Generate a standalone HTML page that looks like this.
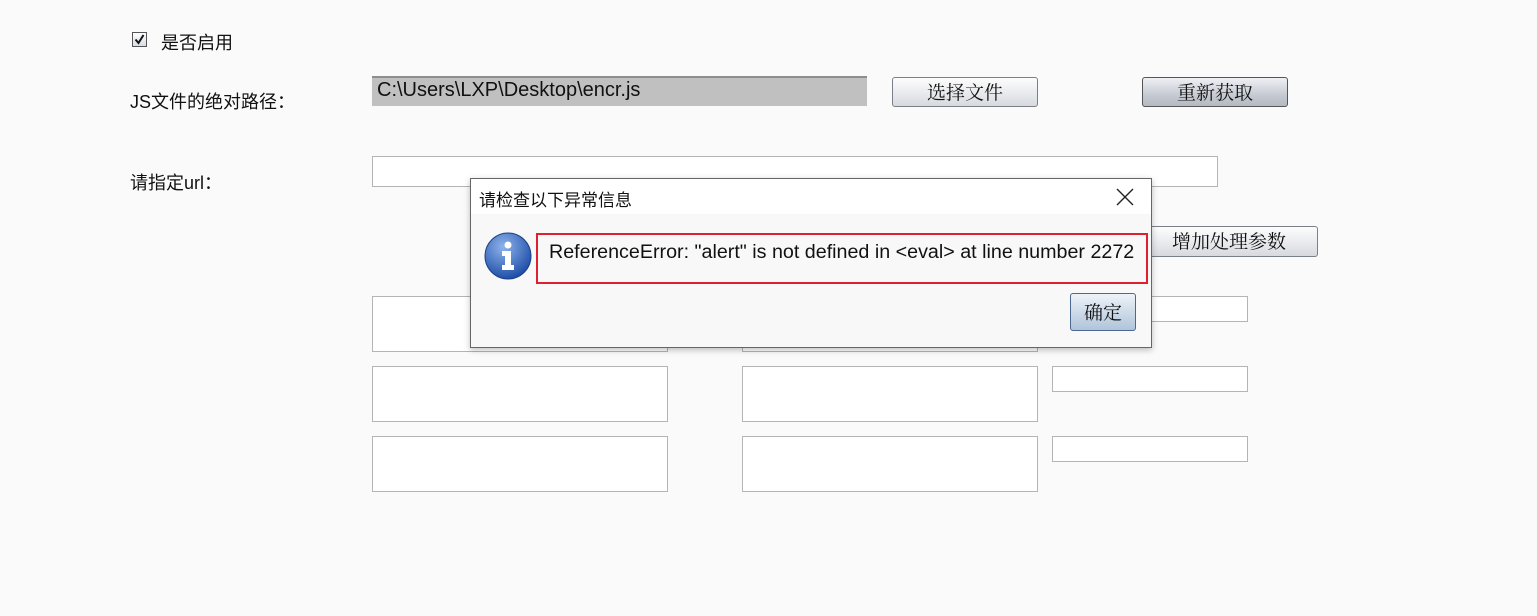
<!DOCTYPE html>
<html><head><meta charset="utf-8"><style>
body{margin:0;width:1537px;height:616px;background:#fafafa;position:relative;overflow:hidden;font-family:"Liberation Sans","Noto Sans CJK SC",sans-serif;color:#111}
.a{position:absolute}
.t{font-size:18px}
.box{position:absolute;background:#fff;border:1px solid #b4b4b4;box-sizing:border-box}
.btn{position:absolute;box-sizing:border-box;border:1px solid #7a7f88;border-radius:3px;background:linear-gradient(#fdfdfd,#e6e8ec 60%,#d6d9de);font-size:19px;text-align:center;line-height:27px;font-family:"Noto Serif CJK SC","WenQuanYi Zen Hei",serif}
</style></head><body>
<svg class="a" style="left:132px;top:32px" width="16" height="16"><defs><linearGradient id="c" x1="0" y1="0" x2="0" y2="1"><stop offset="0" stop-color="#fff"/><stop offset="1" stop-color="#d5dce4"/></linearGradient></defs><rect x="0.5" y="0.5" width="14" height="14" fill="url(#c)" stroke="#555"/><path d="M3.5 7.5L6.5 11L11.5 3" fill="none" stroke="#111" stroke-width="2"/></svg>
<div class="a t" style="left:161px;top:29px">是否启用</div>
<div class="a t" style="left:130px;top:88px">JS文件的绝对路径：</div>
<div class="a" style="left:372px;top:76px;width:495px;height:30px;background:#c0c0c0;border-top:2px solid #8e8e8e;box-sizing:border-box"></div>
<div class="a" style="left:377px;top:79px;font-size:20px">C:\Users\LXP\Desktop\encr.js</div>
<div class="btn" style="left:892px;top:77px;width:146px;height:30px">选择文件</div>
<div class="btn" style="left:1142px;top:77px;width:146px;height:30px;background:linear-gradient(#eef0f4,#c6cad2 60%,#b4b9c2);border-color:#555">重新获取</div>
<div class="a t" style="left:130px;top:169px">请指定url：</div>
<div class="box" style="left:372px;top:156px;width:846px;height:31px"></div>
<div class="btn" style="left:1140px;top:226px;width:178px;height:31px">增加处理参数</div>
<div class="box" style="left:372px;top:296px;width:296px;height:56px"></div>
<div class="box" style="left:372px;top:366px;width:296px;height:56px"></div>
<div class="box" style="left:372px;top:436px;width:296px;height:56px"></div>
<div class="box" style="left:742px;top:296px;width:296px;height:56px"></div>
<div class="box" style="left:742px;top:366px;width:296px;height:56px"></div>
<div class="box" style="left:742px;top:436px;width:296px;height:56px"></div>
<div class="box" style="left:1052px;top:296px;width:196px;height:26px"></div>
<div class="box" style="left:1052px;top:366px;width:196px;height:26px"></div>
<div class="box" style="left:1052px;top:436px;width:196px;height:26px"></div>

<div class="a" style="left:470px;top:178px;width:682px;height:170px;border:1px solid #666;box-sizing:border-box;background:#f8f8f8;box-shadow:0 2px 6px rgba(0,0,0,.25)">
 <div class="a" style="left:0;top:0;width:680px;height:35px;background:#fff"></div>
 <div class="a" style="left:8px;top:7px;font-size:17px">请检查以下异常信息</div>
 <svg class="a" style="left:645px;top:9px" width="18" height="18"><path d="M1 1L17 17M17 1L1 17" stroke="#222" stroke-width="1.4"/></svg>
 <svg class="a" style="left:13px;top:53px" width="48" height="48"><defs><radialGradient id="g" cx="40%" cy="30%" r="70%"><stop offset="0" stop-color="#8fb4ec"/><stop offset="1" stop-color="#1f4fa8"/></radialGradient></defs><circle cx="24" cy="24" r="23" fill="url(#g)" stroke="#1b3f86"/><circle cx="24" cy="13" r="3.5" fill="#fff"/><path d="M18 19h9v14h3v5H18v-5h3v-9h-3z" fill="#fff"/></svg>
 <div class="a" style="left:65px;top:54px;width:612px;height:51px;border:2px solid #e02030;box-sizing:border-box"></div>
 <div class="a" style="left:78px;top:62px;font-size:19.7px">ReferenceError: "alert" is not defined in &lt;eval&gt; at line number 2272</div>
 <div class="btn" style="left:599px;top:114px;width:66px;height:38px;line-height:36px;border-color:#4a6890;background:linear-gradient(#eef3f8,#c8d6e6 60%,#b0c4da)">确定</div>
</div>
</body></html>
